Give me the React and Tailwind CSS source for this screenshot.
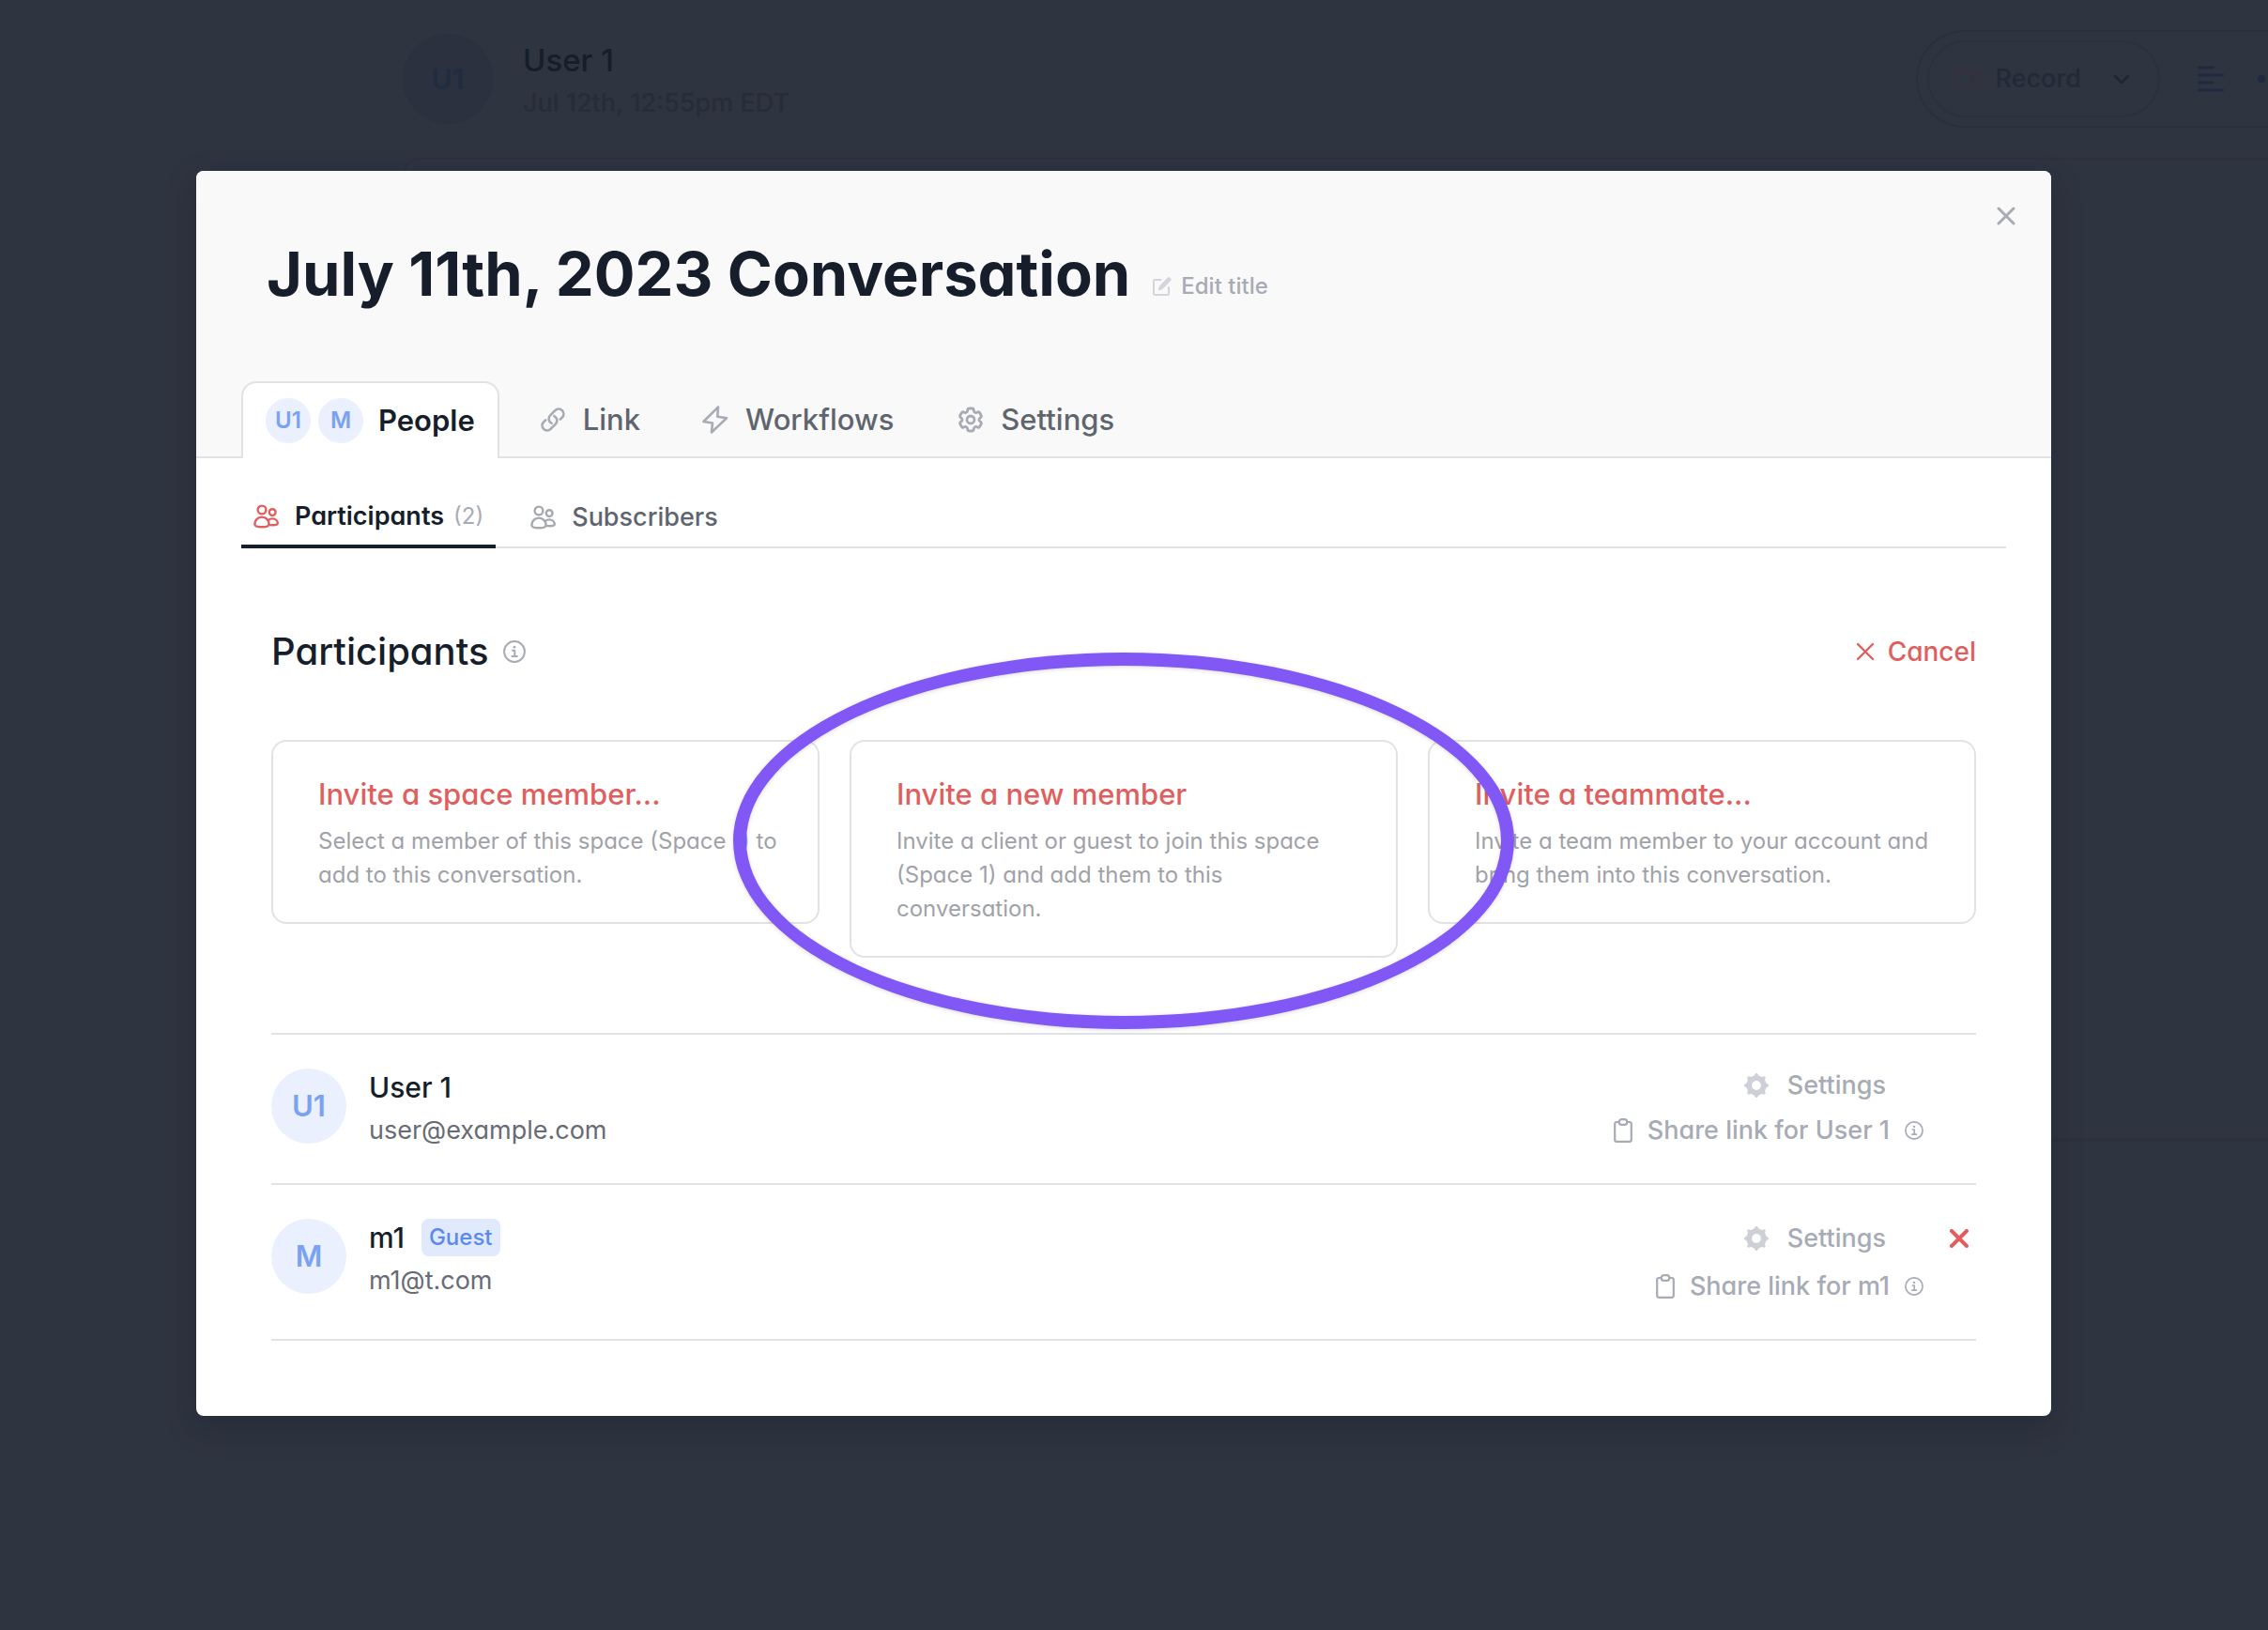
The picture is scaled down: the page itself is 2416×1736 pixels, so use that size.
import { HiOutlineLink, HiOutlineCog6Tooth } from "react-icons/hi2";

function CloseIcon({ className, strokeWidth }) {
  return (
    <svg viewBox="0 0 20 20" className={className} fill="none" stroke="currentColor" strokeWidth={strokeWidth} strokeLinecap="round" aria-hidden="true">
      <path d="M2 2 18 18M18 2 2 18" />
    </svg>
  );
}

function PeopleIcon({ className }) {
  return (
    <svg viewBox="0 0 27 26" className={className} fill="none" stroke="currentColor" strokeWidth="2.400" strokeLinecap="round" strokeLinejoin="round" aria-hidden="true">
      <circle cx="9" cy="6" r="4.400" />
      <circle cx="20.2" cy="8.6" r="3.400" />
      <path d="M1.400 21.6C1.200 16.8 4.8 13.6 9 13.6s7.800 3.200 7.600 8c-.2 1.800-4 2.600-7.600 2.600s-7.400-.8-7.600-2.600Z" />
      <path d="M16 16.800c1.200-1 2.800-1.400 4.200-1.400 3.200 0 5.600 2.200 5.600 4.800 0 1.600-3 2-5.600 2-1.300 0-2.400-.1-3.400-.3" />
    </svg>
  );
}

function BoltIcon({ className }) {
  return (
    <svg viewBox="0 0 28 30" className={className} fill="none" stroke="currentColor" strokeWidth="2.600" strokeLinejoin="round" aria-hidden="true">
      <path d="M17 1.500 1.500 17l9.500 1.500L10 28.500 26 13.200l-9.700-1.500Z" />
    </svg>
  );
}

function EditIcon({ className }) {
  return (
    <svg viewBox="0 0 20 20" className={className} fill="none" stroke="currentColor" strokeWidth="2" strokeLinecap="round" strokeLinejoin="round" aria-hidden="true">
      <path d="M8.500 3H2.500A1.500 1.500 0 0 0 1 4.500v13A1.500 1.500 0 0 0 2.500 19h13a1.500 1.500 0 0 0 1.500-1.500V11" />
      <path d="M6.400 13.600 7.400 10 15.600 1.300a1.900 1.900 0 0 1 3 .2 1.900 1.900 0 0 1-.1 2.600L10.200 12.600Z" fill="currentColor" strokeWidth="1" />
    </svg>
  );
}

function InfoIcon({ className }) {
  return (
    <svg viewBox="0 0 24 24" className={className} fill="none" stroke="currentColor" strokeWidth="2" strokeLinecap="round" strokeLinejoin="round" aria-hidden="true">
      <circle cx="12" cy="12" r="10.900" />
      <path d="M10 10.800h2.300v6.200M9.500 17h5.400" />
      <circle cx="12" cy="7.200" r="1.400" fill="currentColor" stroke="none" />
    </svg>
  );
}

function ClipboardIcon({ className }) {
  return (
    <svg viewBox="0 0 20 26" className={className} fill="none" stroke="currentColor" strokeWidth="2.200" strokeLinejoin="round" aria-hidden="true">
      <path d="M5.500 4H3.200a2 2 0 0 0-2 2v16.800a2 2 0 0 0 2 2h13.600a2 2 0 0 0 2-2V6a2 2 0 0 0-2-2h-2.300" />
      <rect x="5.700" y="1.200" width="8.600" height="5.600" rx="2.800" />
    </svg>
  );
}

function GearIcon({ className }) {
  return (
    <svg viewBox="-13 -13 26 26" className={className} fill="currentColor" aria-hidden="true">
      <path
        fillRule="evenodd"
        d="M-2.400-10.500-1-12.700Q0-13.300 1-12.700L2.400-10.500 5.700-9.100 8.300-9.700Q9.700-9.700 9.700-8.300L9.100-5.700 10.500-2.400 12.700-1Q13.300 0 12.700 1L10.500 2.400 9.100 5.700 9.700 8.300Q9.700 9.700 8.300 9.700L5.700 9.100 2.400 10.500 1 12.700Q0 13.300-1 12.700L-2.400 10.500-5.700 9.100-8.300 9.700Q-9.700 9.700-9.700 8.300L-9.100 5.700-10.500 2.400-12.700 1Q-13.300 0-12.700-1L-10.500-2.400-9.100-5.700-9.700-8.300Q-9.700-9.700-8.300-9.700L-5.700-9.100ZM0-4.900A4.900 4.900 0 1 0 0 4.900 4.900 4.900 0 1 0 0-4.900Z"
      />
    </svg>
  );
}

function Backdrop() {
  return (
    <div className="flex min-h-screen flex-col overflow-hidden">
      <header className="flex h-[168px] items-center pl-[429px]">
        <div className="flex size-24 items-center justify-center rounded-full bg-[#2b313e] text-[30px] font-semibold text-[#212c41]">U1</div>
        <div className="ml-8 pt-[3px]">
          <div className="text-[33px] leading-12 font-medium text-[#161d2b]">User 1</div>
          <div className="text-[27px] leading-11 font-medium text-[#262c39]">Jul 12th, 12:55pm EDT</div>
        </div>
        <div className="ml-auto flex h-[104px] items-center rounded-l-full border-2 border-r-0 border-[#2a303c] pl-[10px]">
          <button type="button" className="flex h-[82px] items-center rounded-full border-2 border-[#2b313d] pr-[30px] pl-[26px] text-[27px] font-medium text-[#222937]">
            <svg viewBox="0 0 29 20" className="mr-4 h-5 w-[29px] text-[#37303c]" fill="none" stroke="currentColor" strokeWidth="2" strokeLinejoin="round" aria-hidden="true">
              <rect x="1" y="1" width="18.500" height="18" rx="3" />
              <path d="M20 8.500 28 1.500v17L20 11.500Z" />
            </svg>
            Record
            <svg viewBox="0 0 18 11" className="ml-[34px] h-[11px] w-[18px] text-[#1f2735]" fill="none" stroke="currentColor" strokeWidth="3" strokeLinecap="round" strokeLinejoin="round" aria-hidden="true">
              <path d="M2 2 9 9 16 2" />
            </svg>
          </button>
          <button type="button" aria-label="Transcript" className="ml-10">
            <svg viewBox="0 0 28 28" className="size-7 text-[#1f2a40]" fill="none" stroke="currentColor" strokeWidth="3" strokeLinecap="round" aria-hidden="true">
              <path d="M1.500 2h15M1.500 10h25M1.500 18h15M1.500 26h25" />
            </svg>
          </button>
          <div className="mr-[3px] ml-9 size-2 rounded-full bg-[#1f2a40]" />
        </div>
      </header>
      <div className="ml-[430px] h-[1048px] rounded-tl-2xl border-t-2 border-b-4 border-l-2 border-[#2c313d]" />
    </div>
  );
}

function Avatar({ children, className }) {
  return <span className={`flex items-center justify-center rounded-full bg-[#eaf0fd] text-[#7ba2f2] ${className}`}>{children}</span>;
}

const invites = [
  { title: "Invite a space member...", text: "Select a member of this space (Space 1) to add to this conversation." },
  { title: "Invite a new member", text: "Invite a client or guest to join this space (Space 1) and add them to this conversation." },
  { title: "Invite a teammate...", text: "Invite a team member to your account and bring them into this conversation." },
];

const people = [
  { initials: "U1", name: "User 1", email: "user@example.com" },
  { initials: "M", name: "m1", email: "m1@t.com", guest: true },
];

function PersonRow({ person }) {
  return (
    <li className="flex items-start border-t-2 border-[#e1e2e6] pt-9 pb-[38px]">
      <Avatar className="size-20 text-[31px] font-semibold">{person.initials}</Avatar>
      <div className="ml-6">
        <div className="flex h-10 items-center gap-[18px]">
          <span className="text-[30px] leading-10 font-medium text-[#161d2b]">{person.name}</span>
          {person.guest && (
            <span className="flex h-10 items-center rounded-lg bg-[#e0eafc] px-2 text-[24px] font-medium text-[#5b89ee]">Guest</span>
          )}
        </div>
        <div className="mt-2 text-[27px] leading-9 text-[#676b75]">{person.email}</div>
      </div>
      <div className="ml-auto flex flex-col items-end gap-3 text-[27px] leading-9 font-medium text-[#a7abb5]">
        <div className="flex items-center">
          <button type="button" className="flex items-center gap-5">
            <GearIcon className="size-[26px] text-[#cdd0d6]" />
            Settings
          </button>
          <div className="flex w-24 justify-end pr-2">
            {person.guest && (
              <button type="button" aria-label={`Remove ${person.name}`} className="flex h-[42px] items-center text-[#df5f5e]">
                <CloseIcon className="size-5" strokeWidth="4" />
              </button>
            )}
          </div>
        </div>
        <div className="flex items-center pr-14">
          <button type="button" className="flex items-center gap-4">
            <ClipboardIcon className="h-[26px] w-5" />
            Share link for {person.name}
          </button>
          <InfoIcon className="ml-4 size-5" />
        </div>
      </div>
    </li>
  );
}

function Dialog() {
  return (
    <section role="dialog" aria-label="Conversation settings" className="overflow-hidden rounded-lg bg-white shadow-[0_12px_32px_rgba(15,20,32,0.25)]">
      <header className="relative border-b-2 border-[#e1e2e6] bg-[#f9f9f9] pt-[70px]">
        <button type="button" aria-label="Close" className="absolute top-[38px] right-[38px] text-[#a7abb5]">
          <CloseIcon className="size-5" strokeWidth="3" />
        </button>
        <div className="flex items-baseline gap-6 px-[75px]">
          <h1 className="text-[65px] leading-20 font-bold text-[#161d2b]">July 11th, 2023 Conversation</h1>
          <button type="button" className="flex items-center gap-[10px] text-[24px] font-medium text-[#a7abb5]">
            <EditIcon className="size-5 text-[#d3d5db]" />
            Edit title
          </button>
        </div>
        <nav className="-mb-[2px] mt-[74px] flex pl-12 text-[31px] font-medium text-[#5f656f]">
          <button type="button" className="mr-[10px] flex h-[82px] items-center gap-2 rounded-t-2xl border-2 border-b-0 border-[#e1e2e6] bg-white px-6">
            <Avatar className="size-12 text-[24px] font-semibold">U1</Avatar>
            <Avatar className="size-12 text-[24px] font-semibold">M</Avatar>
            <span className="ml-2 font-semibold text-[#161d2b]">People</span>
          </button>
          <button type="button" className="flex items-center gap-[18px] px-[33px]">
            <HiOutlineLink className="size-7 text-[#a7abb5]" strokeWidth="2.300" />
            Link
          </button>
          <button type="button" className="flex items-center gap-[18px] px-[33px]">
            <BoltIcon className="h-[30px] w-7 text-[#a7abb5]" />
            Workflows
          </button>
          <button type="button" className="flex items-center gap-4 px-[33px]">
            <HiOutlineCog6Tooth className="size-8 text-[#a7abb5]" strokeWidth="2.100" />
            Settings
          </button>
        </nav>
      </header>

      <nav className="mx-12 mt-8 flex h-16 border-b-2 border-[#e1e2e6] text-[27px] font-medium text-[#5f656f]">
        <button type="button" className="-mb-[2px] flex items-center border-b-4 border-[#161d2b] px-[13px]">
          <PeopleIcon className="h-[26px] w-[27px] text-[#df5f5e]" />
          <span className="ml-[17px] font-semibold text-[#161d2b]">Participants</span>
          <span className="ml-[10px] text-[24px] font-normal text-[#a7abb5]">(2)</span>
        </button>
        <button type="button" className="ml-6 flex items-center gap-[17px] px-[13px]">
          <PeopleIcon className="h-[26px] w-[27px] text-[#a5a8ae]" />
          Subscribers
        </button>
      </nav>

      <div className="px-20 pt-[86px] pb-20">
        <div className="flex items-center">
          <h2 className="text-[40px] leading-12 font-medium text-[#161d2b]">Participants</h2>
          <InfoIcon className="ml-4 size-6 text-[#a7abb5]" />
          <button type="button" className="ml-auto flex items-center gap-[14px] text-[28px] font-medium text-[#df5f5e]">
            <CloseIcon className="size-5" strokeWidth="2.400" />
            Cancel
          </button>
        </div>

        <div className="relative mt-[70px]">
          <div className="grid grid-cols-3 items-start gap-8">
            {invites.map((invite) => (
              <button key={invite.title} type="button" className="rounded-2xl border-2 border-[#e1e2e6] pt-9 pr-8 pb-8 pl-12 text-left">
                <span className="block text-[31px] leading-10 font-medium text-[#df5f5e]">{invite.title}</span>
                <span className="mt-3 block text-[24px] leading-9 text-[#9fa2a8]">{invite.text}</span>
              </button>
            ))}
          </div>
          <div className="pointer-events-none absolute -top-[93px] left-1/2 h-[401px] w-[832px] -translate-x-1/2 rounded-[50%] border-14 border-[#8158f6] drop-shadow-sm" />
        </div>

        <ul className="mt-20 border-b-2 border-[#e1e2e6]">
          {people.map((person) => (
            <PersonRow key={person.name} person={person} />
          ))}
        </ul>
      </div>
    </section>
  );
}

export default function App() {
  return (
    <div className="relative min-h-screen overflow-hidden bg-[#2e3440] font-['Inter',sans-serif] [font-feature-settings:'cv11']">
      <Backdrop />
      <div className="absolute inset-0 pt-[182px] pr-[231px] pl-[209px]">
        <Dialog />
      </div>
    </div>
  );
}
